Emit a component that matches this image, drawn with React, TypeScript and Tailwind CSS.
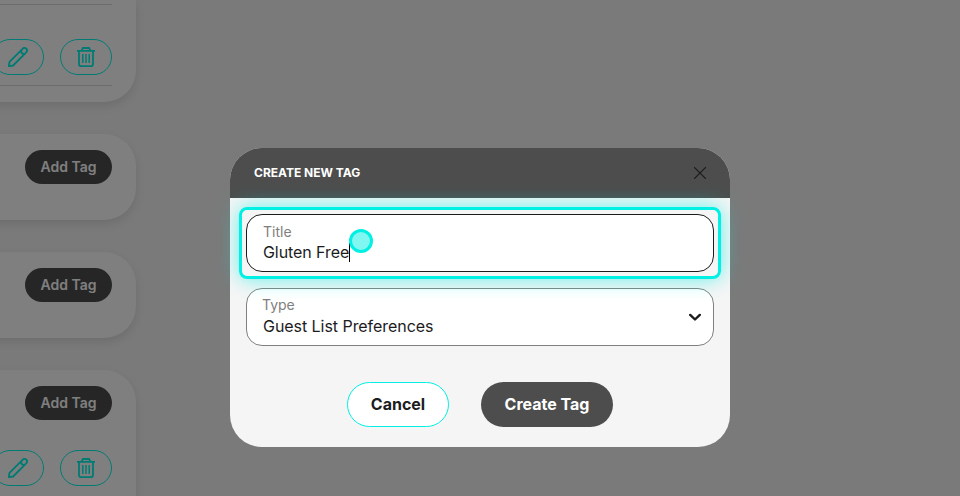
type IconProps = { className?: string };

function PencilIcon({ className }: IconProps) {
    return (
        <svg className={className} viewBox="0 0 20 20" fill="none" stroke="currentColor" strokeWidth="1.9" strokeLinejoin="round">
            <path d="M0.9 19.1L1.5 14.9L14.6 1.8C15.6 0.8 17.2 0.7 18.3 1.7C19.3 2.8 19.2 4.4 18.2 5.4L5.1 18.5Z" />
            <path d="M12.9 3.5C13 5.7 14.3 7 16.5 7.1" />
        </svg>
    );
}

function TrashIcon({ className }: IconProps) {
    return (
        <svg className={className} viewBox="0 0 18 20" fill="none" stroke="currentColor" strokeWidth="1.8">
            <path d="M0 3.9H18M4.7 3.7L5.9 1H12.1L13.3 3.7" />
            <path d="M2 4V16.9C2 18.3 2.7 19.1 4.1 19.1H13.9C15.3 19.1 16 18.3 16 16.9V4" />
            <path strokeWidth="1.5" d="M5.8 7V15.9M9 7V15.9M12.2 7V15.9" />
        </svg>
    );
}

function RowActions() {
    return (
        <div className="flex justify-end gap-4">
            <button aria-label="Edit" className="flex h-9 w-[52px] shrink-0 items-center justify-center rounded-full border border-[#00f6e6] text-[#00f6e6]">
                <PencilIcon className="size-5" />
            </button>
            <button aria-label="Delete" className="flex h-9 w-[52px] shrink-0 items-center justify-center rounded-full border border-[#00f6e6] text-[#00f6e6]">
                <TrashIcon className="h-5 w-[18px]" />
            </button>
        </div>
    );
}

function AddTagButton() {
    return (
        <button className="ml-auto block h-[34px] w-[87px] shrink-0 rounded-full bg-[#4d4d4d] text-sm font-semibold text-white">
            Add Tag
        </button>
    );
}

export default function App() {
    return (
        <div className="relative h-[496px] w-[960px] overflow-hidden bg-[#f4f4f4] font-[Inter,sans-serif] text-[#1c1c1e]">
            {/* Tag groups */}
            <main className="-ml-8 flex w-[168px] flex-col gap-8">
                <section className="h-[102px] rounded-br-[32px] bg-white pr-6 pt-1 shadow-[0_4px_10px_rgba(0,0,0,0.1)]">
                    <div className="flex h-[82px] flex-col justify-end border-y border-[#d9d9d9] pb-[10px]">
                        <RowActions />
                    </div>
                </section>
                <section className="h-[86px] rounded-r-[32px] bg-white pr-6 pt-4 shadow-[0_4px_10px_rgba(0,0,0,0.1)]">
                    <AddTagButton />
                </section>
                <section className="h-[86px] rounded-r-[32px] bg-white pr-6 pt-4 shadow-[0_4px_10px_rgba(0,0,0,0.1)]">
                    <AddTagButton />
                </section>
                <section className="flex h-40 flex-col gap-[30px] rounded-r-[32px] bg-white pr-6 pt-4 shadow-[0_4px_10px_rgba(0,0,0,0.1)]">
                    <AddTagButton />
                    <RowActions />
                </section>
            </main>

            {/* Dialog */}
            <div className="absolute inset-0 flex justify-center bg-black/50 pt-[148px]">
                <div role="dialog" className="relative h-[299px] w-[500px] rounded-[32px] bg-[#f5f5f5]">
                    <header className="flex h-[50px] items-center justify-between rounded-t-[32px] bg-[#4d4d4d] px-6">
                        <h2 className="text-xs font-bold text-white">CREATE NEW TAG</h2>
                        <button aria-label="Close">
                            <svg className="size-3" viewBox="0 0 12 12" fill="none" stroke="#1c1c1e" strokeWidth="1.3" strokeLinecap="round">
                                <path d="M0.6 0.6L11.4 11.4M11.4 0.6L0.6 11.4" />
                            </svg>
                        </button>
                    </header>
                    <div className="flex flex-col gap-4 px-4 pt-4">
                        <div className="h-[58px] rounded-2xl border border-[#1c1c1e] bg-white px-4 pt-2">
                            <div className="text-sm leading-[18px] text-[#808080]">Title</div>
                            <div className="flex items-center text-base leading-[22px] tracking-[-0.08px]">
                                Gluten Free
                                <span className="h-[19px] w-px bg-black" />
                            </div>
                        </div>
                        <div className="flex h-[58px] items-center justify-between rounded-2xl border border-[#808080] bg-white pl-4 pr-3">
                            <div>
                                <div className="-ml-px text-sm leading-4 text-[#808080]">Type</div>
                                <div className="pt-0.5 text-base leading-[22px] tracking-[-0.05px]">Guest List Preferences</div>
                            </div>
                            <svg className="h-2 w-3" viewBox="0 0 12 8" fill="none" stroke="#1c1c1e" strokeWidth="2.4" strokeLinecap="round" strokeLinejoin="round">
                                <path d="M1.2 1.9L6 6.5L10.8 1.9" />
                            </svg>
                        </div>
                    </div>
                    <footer className="flex justify-center gap-8 pt-9">
                        <button className="h-[45px] w-[102px] rounded-full border border-[#00f0e4] bg-white pb-0.5 text-base font-bold">Cancel</button>
                        <button className="h-[45px] w-[132px] rounded-full bg-[#4d4d4d] pb-0.5 text-base font-bold text-white">Create Tag</button>
                    </footer>

                    {/* Highlight and pointer */}
                    <div className="pointer-events-none absolute left-[9px] top-[59px] h-[72px] w-[482px] rounded-lg border-3 border-[#00f0e4] shadow-[0_0_20px_rgba(0,240,228,0.6)]" />
                    <div className="pointer-events-none absolute left-[119px] top-[81px] size-6 rounded-full border-3 border-[#00f0e4] bg-[#80f7f1]" />
                </div>
            </div>
        </div>
    );
}
